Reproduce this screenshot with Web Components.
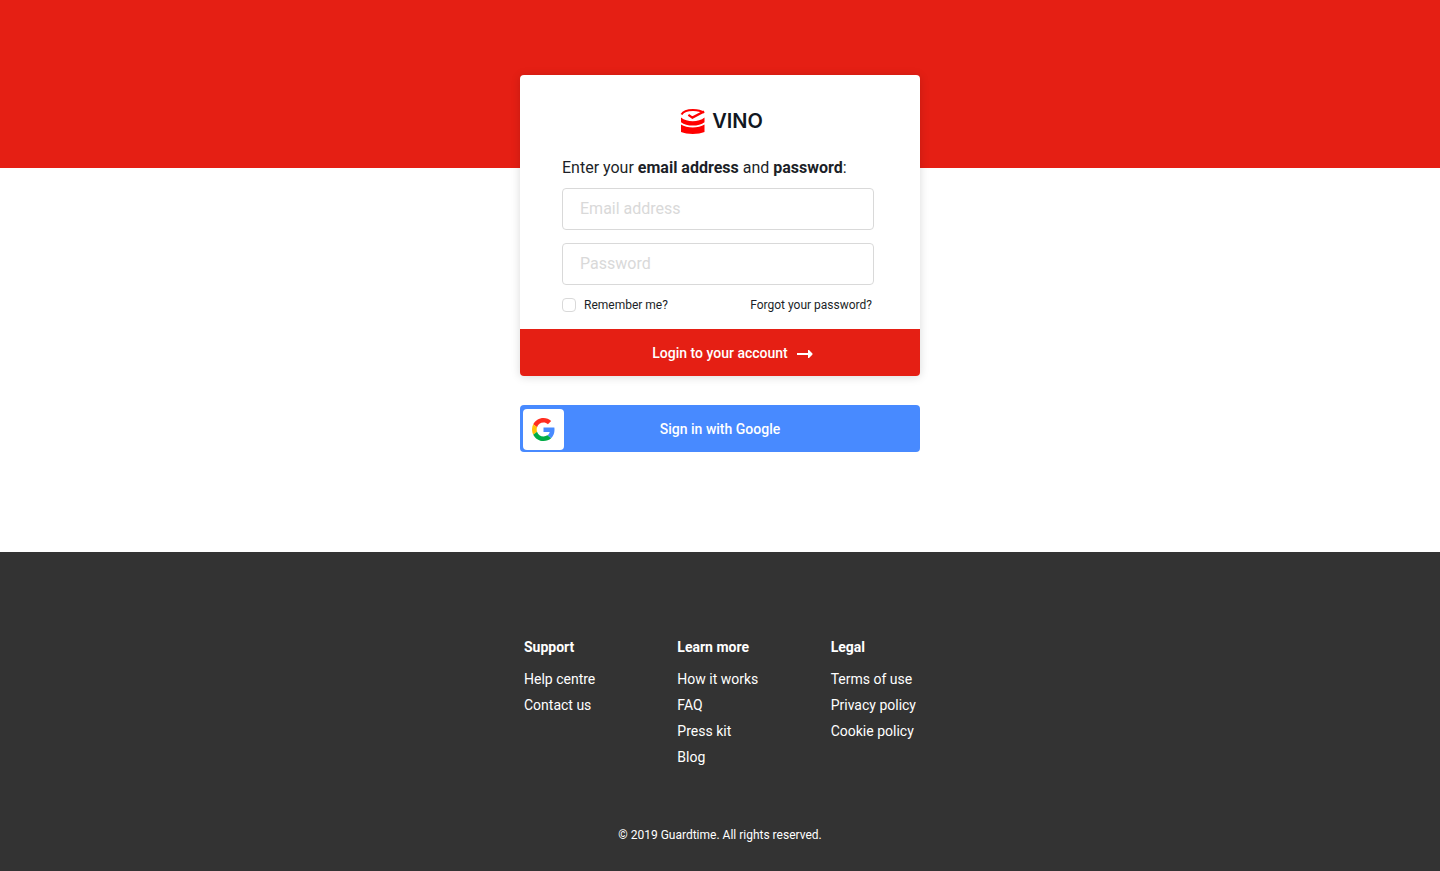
<!DOCTYPE html>
<html lang="en">
<head>
<meta charset="utf-8">
<meta name="viewport" content="width=device-width, initial-scale=1">
<title>VINO – Log in</title>
<style>
  :root {
    --red: #e51f14;
    --blue: #488aff;
    --dark: #333;
    --ink: #1c1f28;
    --line: #d9d9d9;
    --radius: 4px;
  }
  body {
    margin: 0;
    font: 16px/24px Roboto, "Liberation Sans", sans-serif;
    color: var(--ink);
    background: #fff;
  }
</style>
</head>
<body>
<login-page>
  <login-card></login-card>
  <google-button>Sign in with Google</google-button>
  <site-footer slot="footer">
    <link-group heading="Support">
      <a href="#help">Help centre</a>
      <a href="#contact">Contact us</a>
    </link-group>
    <link-group heading="Learn more">
      <a href="#how">How it works</a>
      <a href="#faq">FAQ</a>
      <a href="#press">Press kit</a>
      <a href="#blog">Blog</a>
    </link-group>
    <link-group heading="Legal">
      <a href="#terms">Terms of use</a>
      <a href="#privacy">Privacy policy</a>
      <a href="#cookies">Cookie policy</a>
    </link-group>
    <span slot="copyright">© 2019 Guardtime. All rights reserved.</span>
  </site-footer>
</login-page>

<script>
  const define = (name, html, setup) => {
    const template = document.createElement('template');
    template.innerHTML = html;
    customElements.define(name, class extends HTMLElement {
      constructor() {
        super();
        this.attachShadow({ mode: 'open' }).append(template.content.cloneNode(true));
      }
      connectedCallback() {
        if (setup) setup(this, this.shadowRoot);
      }
    });
  };

  define('login-page', `
    <style>
      :host { display: flex; flex-direction: column; min-height: 100vh; }
      main {
        display: flex; flex-direction: column; align-items: center; gap: 29px;
        padding: 75px 16px 100px;
        background: linear-gradient(var(--red) 168px, #fff 168px);
      }
      ::slotted(:not([slot])) { width: 100%; max-width: 400px; }
      ::slotted([slot="footer"]) { flex: 1; }
    </style>
    <main><slot></slot></main>
    <slot name="footer"></slot>
  `);

  define('vino-logo', `
    <style>
      :host { display: flex; justify-content: center; align-items: center; gap: 7px; }
      svg { display: block; width: 28px; height: 26px; }
      span { font: 600 20px/28px Inter, Roboto, sans-serif; color: #111722; }
    </style>
    <svg viewBox="0 0 28 26" aria-hidden="true">
      <g fill="none" stroke="#f00" stroke-width="2">
        <path d="M4.500 6.400C6.500 3 11 2 16 2c4.500 0 8.400.9 11 2.800"/>
        <path d="M11.400 6.800l4 2.800L27 3.600" stroke-width="2.200"/>
      </g>
      <path fill="#f00" d="M4 9.600c6 5 17.500 5 23.500 0v4.600c-5.500 4.500-18 4.500-23.500 0zM4 16.600c6 4 17.500 4 23.500 0v7.400c-6 2.500-17.500 2.500-23.500 0z"/>
    </svg>
    <span>VINO</span>
  `);

  define('login-card', `
    <style>
      :host { display: block; }
      form {
        border-radius: var(--radius); background: #fff; overflow: hidden;
        box-shadow: 0 1px 10px rgba(0, 0, 0, .15);
      }
      .body { padding: 32px 46px 14px 42px; }
      vino-logo { margin: 0 -46px 21px -42px; }
      p { margin: 0 0 8px; }
      .field {
        display: block; box-sizing: border-box; width: 100%; height: 42px;
        margin: 0 0 13px; padding: 0 17px 2px;
        border: 1px solid var(--line); border-radius: var(--radius);
        background: #fff; font: inherit; color: inherit;
      }
      .field::placeholder { color: #d9d9d9; opacity: 1; }
      .options {
        display: flex; justify-content: space-between; align-items: center;
        margin-top: -3px; padding-right: 2px; font-size: 12px; line-height: 20px;
      }
      .remember { display: flex; align-items: center; gap: 8px; }
      .remember input {
        appearance: none; box-sizing: border-box; width: 14px; height: 14px; margin: 0;
        border: 1px solid var(--line); border-radius: 4px; background: #fff;
      }
      .remember input:checked { background: var(--red); }
      a { color: inherit; text-decoration: none; }
      button {
        display: grid; grid-template-columns: 1fr auto 1fr; align-items: center; column-gap: 9px;
        width: 100%; height: 47px; padding: 0; border: 0;
        background: var(--red); color: #fff; font: 500 14px/24px Roboto, "Liberation Sans", sans-serif;
        cursor: pointer;
      }
      button span { grid-column: 2; }
      svg { display: block; width: 16px; height: 10px; }
    </style>
    <form>
      <div class="body">
        <vino-logo></vino-logo>
        <p>Enter your <b>email address</b> and <b>password</b>:</p>
        <input class="field" type="email" placeholder="Email address" aria-label="Email address">
        <input class="field" type="password" placeholder="Password" aria-label="Password">
        <div class="options">
          <label class="remember"><input type="checkbox">Remember me?</label>
          <a href="#forgot">Forgot your password?</a>
        </div>
      </div>
      <button type="submit"><span>Login to your account</span>
        <svg viewBox="0 0 16 10" aria-hidden="true"><path fill="#fff" d="M0 5h11V2h1l3.500 3.500v1L12 10h-1V7H0z"/></svg>
      </button>
    </form>
  `, (host, root) => {
    root.querySelector('form').onsubmit = event => event.preventDefault();
  });

  define('google-button', `
    <style>
      :host { display: block; }
      button {
        display: grid; grid-template-columns: 41px 1fr 41px; align-items: center;
        width: 100%; height: 47px; padding: 1px 3px 0; border: 0; border-radius: var(--radius);
        background: var(--blue); color: #fff; font: 500 14px/24px Roboto, "Liberation Sans", sans-serif;
        cursor: pointer;
      }
      .mark { display: grid; place-items: center; height: 41px; border-radius: var(--radius); background: #fff; }
      svg { display: block; width: 23px; height: 23px; }
    </style>
    <button type="button">
      <span class="mark">
        <svg viewBox="0 0 48 48" aria-hidden="true">
          <path fill="#ff2d20" d="M24 9.500c3.540 0 6.710 1.220 9.210 3.600l6.850-6.850C35.900 2.380 30.470 0 24 0 14.620 0 6.510 5.380 2.560 13.220l7.980 6.190C12.430 13.720 17.740 9.500 24 9.500z"/>
          <path fill="#488aff" d="M46.980 24.550c0-1.570-.15-3.090-.38-4.550H24v9.020h12.940c-.58 2.960-2.260 5.480-4.780 7.180l7.730 6c4.510-4.180 7.090-10.360 7.090-17.650z"/>
          <path fill="#ffc107" d="M10.530 28.590c-.48-1.450-.76-2.990-.76-4.590s.27-3.140.76-4.590l-7.980-6.190C.92 16.460 0 20.120 0 24c0 3.880.92 7.540 2.560 10.780z"/>
          <path fill="#00ac47" d="M24 48c6.480 0 11.930-2.130 15.890-5.810l-7.730-6c-2.150 1.450-4.920 2.300-8.160 2.300-6.260 0-11.570-4.220-13.470-9.910l-7.980 6.190C6.510 42.620 14.620 48 24 48z"/>
        </svg>
      </span>
      <span><slot></slot></span>
    </button>
  `);

  define('link-group', `
    <style>
      :host { display: block; font-size: 14px; line-height: 26px; }
      h2 { margin: 0 0 6px; font: inherit; font-weight: 700; }
      nav { display: flex; flex-direction: column; align-items: flex-start; }
      ::slotted(a) { color: inherit; text-decoration: none; }
    </style>
    <h2 id="heading"></h2>
    <nav aria-labelledby="heading"><slot></slot></nav>
  `, (host, root) => {
    root.querySelector('h2').textContent = host.getAttribute('heading');
  });

  define('site-footer', `
    <style>
      :host { display: block; background: var(--dark); color: #fff; }
      footer { padding: 82px 16px 27px; }
      .groups {
        display: grid; grid-template-columns: 1fr 1fr auto;
        max-width: 392px; margin: 0 auto 56px;
      }
      p { margin: 0; font-size: 12px; line-height: 18px; text-align: center; }
    </style>
    <footer>
      <div class="groups"><slot></slot></div>
      <p><slot name="copyright"></slot></p>
    </footer>
  `);
</script>
</body>
</html>
